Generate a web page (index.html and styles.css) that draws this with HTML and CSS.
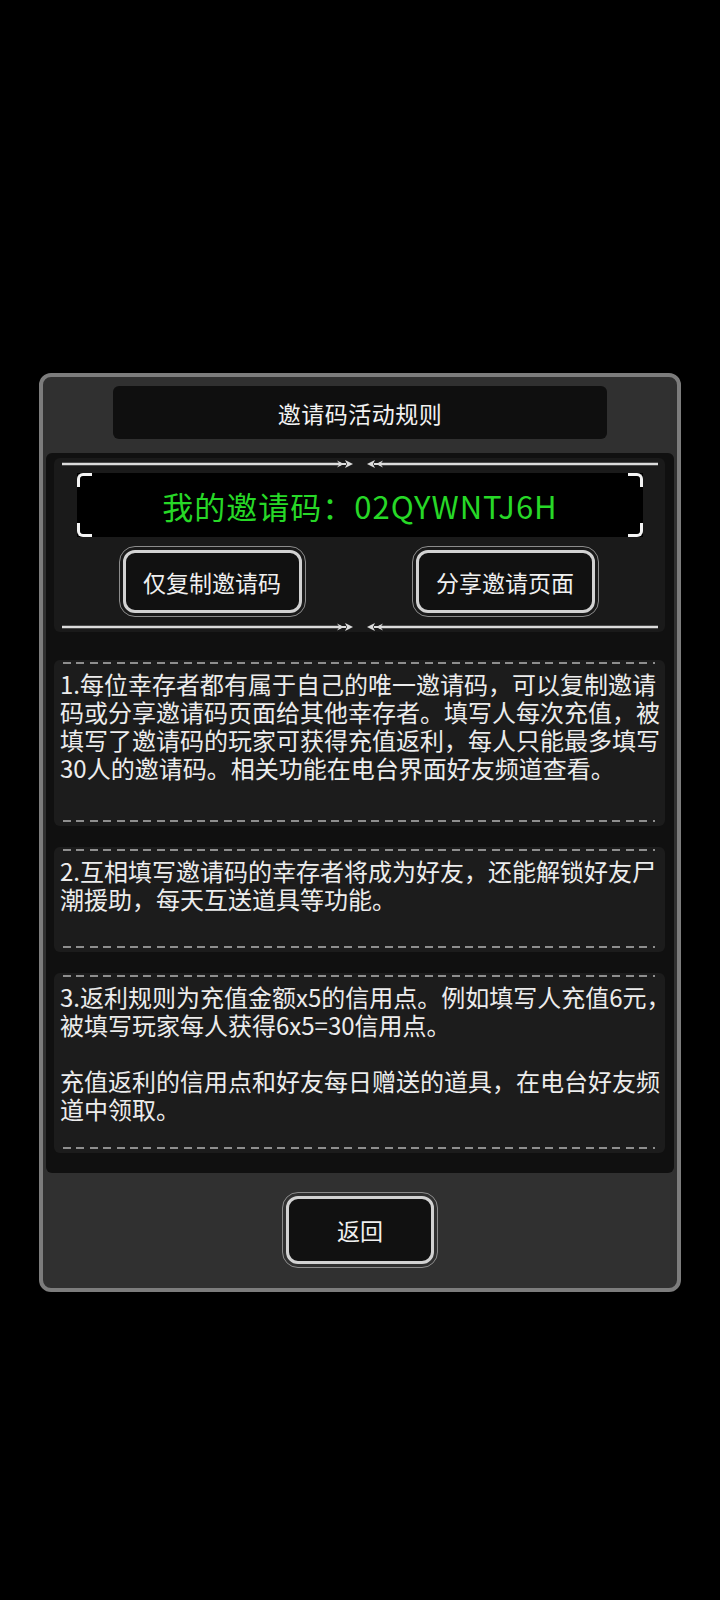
FILE: index.html
```html
<!DOCTYPE html>
<html lang="zh-CN">
<head>
<meta charset="utf-8">
<title>邀请码活动规则</title>
<link rel="stylesheet" href="styles.css">
</head>
<body>
<div class="screen">
  <div class="dialog">
    <div class="title-bar">邀请码活动规则</div>
    <div class="panel">
      <div class="header-section">
        <svg class="divider" width="596" height="10" viewBox="0 0 596 10">
          <line x1="0" y1="5" x2="279" y2="5" stroke="#dcdcdc" stroke-width="2.5"/>
          <polygon points="275,1.5 280,4 284,4 284,6 280,6 275,8.5 277.5,5" fill="#dcdcdc"/>
          <polygon points="283,1 291,5 283,9 285,5" fill="#dcdcdc"/>
          <polygon points="321,1.5 316,4 312,4 312,6 316,6 321,8.5 318.5,5" fill="#dcdcdc"/>
          <polygon points="313,1 305,5 313,9 311,5" fill="#dcdcdc"/>
          <line x1="317" y1="5" x2="596" y2="5" stroke="#dcdcdc" stroke-width="2.5"/>
        </svg>
        <div class="code-box">
          <span class="corner tl"></span><span class="corner tr"></span>
          <span class="corner bl"></span><span class="corner br"></span>
          <span class="code-text">我的邀请码：02QYWNTJ6H</span>
        </div>
        <div class="btn-row">
          <div class="btn-ring btn-action"><div class="btn-face">仅复制邀请码</div></div>
          <div class="btn-ring btn-action"><div class="btn-face">分享邀请页面</div></div>
        </div>
        <svg class="divider divider-bottom" width="596" height="10" viewBox="0 0 596 10">
          <line x1="0" y1="5" x2="279" y2="5" stroke="#dcdcdc" stroke-width="2.5"/>
          <polygon points="275,1.5 280,4 284,4 284,6 280,6 275,8.5 277.5,5" fill="#dcdcdc"/>
          <polygon points="283,1 291,5 283,9 285,5" fill="#dcdcdc"/>
          <polygon points="321,1.5 316,4 312,4 312,6 316,6 321,8.5 318.5,5" fill="#dcdcdc"/>
          <polygon points="313,1 305,5 313,9 311,5" fill="#dcdcdc"/>
          <line x1="317" y1="5" x2="596" y2="5" stroke="#dcdcdc" stroke-width="2.5"/>
        </svg>
      </div>

      <div class="card card-1">
        <p class="card-text">1.每位幸存者都有属于自己的唯一邀请码，可以复制邀请<br>码或分享邀请码页面给其他幸存者。填写人每次充值，被<br>填写了邀请码的玩家可获得充值返利，每人只能最多填写<br>30人的邀请码。相关功能在电台界面好友频道查看。</p>
      </div>
      <div class="card card-2">
        <p class="card-text">2.互相填写邀请码的幸存者将成为好友，还能解锁好友尸<br>潮援助，每天互送道具等功能。</p>
      </div>
      <div class="card card-3">
        <p class="card-text">3.返利规则为充值金额x5的信用点。例如填写人充值6元，<br>被填写玩家每人获得6x5=30信用点。<br><br>充值返利的信用点和好友每日赠送的道具，在电台好友频<br>道中领取。</p>
      </div>
    </div>
    <div class="btn-ring btn-back"><div class="btn-face">返回</div></div>
  </div>
</div>
</body>
</html>
```

FILE: styles.css
```css
* { box-sizing: border-box; }

html, body {
  margin: 0;
  padding: 0;
  background: #000;
}

body {
  font-family: "Noto Sans CJK SC", "Noto Sans", sans-serif;
  color: #ececec;
}

.screen {
  width: 720px;
  height: 1600px;
  padding-top: 373px;
}

.dialog {
  width: 642px;
  height: 919px;
  margin: 0 auto;
  border: 4px solid #7c7c7c;
  border-radius: 12px;
  background: #303030;
  padding: 9px 3px 0 3px;
}

.title-bar {
  width: 494px;
  height: 53px;
  margin: 0 auto;
  background: #0f0f0f;
  border-radius: 6px;
  display: flex;
  align-items: center;
  justify-content: center;
  font-size: 23px;
  color: #f2f2f2;
  letter-spacing: 0.5px;
}

.panel {
  margin-top: 14px;
  height: 720px;
  background: #101010;
  border-radius: 6px;
  padding: 5px 9px 0 8px;
}

.header-section {
  height: 174px;
  background: #1a1a1a;
  border-radius: 6px;
  padding-top: 1px;
  display: flex;
  flex-direction: column;
}

.divider {
  display: block;
  margin-left: 8px;
  flex: none;
}

.divider-bottom {
  margin-top: 5px;
}

.code-box {
  position: relative;
  margin: 4px 22px 0 23px;
  height: 65px;
  background: #000;
  display: flex;
  align-items: center;
  justify-content: center;
}

.code-text {
  color: #27d827;
  font-size: 31px;
  letter-spacing: 1px;
}

.corner {
  position: absolute;
  width: 15px;
  height: 14px;
  border: 0 solid #f4f4f4;
}
.corner.tl { left: 0; top: 0; border-top-width: 3px; border-left-width: 3px; border-top-left-radius: 6px; }
.corner.tr { right: 0; top: 0; border-top-width: 3px; border-right-width: 3px; border-top-right-radius: 6px; }
.corner.bl { left: 0; bottom: 0; border-bottom-width: 3px; border-left-width: 3px; border-bottom-left-radius: 6px; }
.corner.br { right: 0; bottom: 0; border-bottom-width: 3px; border-right-width: 3px; border-bottom-right-radius: 6px; }

.btn-row {
  margin-top: 9px;
  display: flex;
  justify-content: center;
  gap: 106px;
  padding-right: 2px;
}

.btn-ring {
  border: 1.5px solid #8c8c8c;
  border-radius: 16px;
  padding: 3px;
}

.btn-action {
  width: 187px;
  height: 71px;
}

.btn-face {
  width: 100%;
  height: 100%;
  border: 3px solid #d2d2d2;
  border-radius: 12px;
  background: #111;
  display: flex;
  align-items: center;
  justify-content: center;
  font-size: 23px;
  color: #f0f0f0;
}

.card {
  position: relative;
  background: #1c1c1c;
  border-radius: 6px;
  margin-top: 21px;
  padding: 10px 0 0 6px;
}

.card-1 { margin-top: 28px; height: 166px; }
.card-2 { height: 105px; }
.card-3 { height: 180px; }

.card::before,
.card::after {
  content: "";
  position: absolute;
  left: 9px;
  right: 10px;
  height: 2px;
  background: repeating-linear-gradient(to right, #8e8e8e 0 8px, transparent 8px 13.4px);
}
.card::before { top: 2px; }
.card::after { bottom: 4px; }

.card-text {
  margin: 0;
  width: 606px;
  font-size: 24px;
  line-height: 28px;
  color: #ececec;
  white-space: nowrap;
}

.btn-back {
  width: 156px;
  height: 76px;
  margin: 19px auto 0;
}
```
